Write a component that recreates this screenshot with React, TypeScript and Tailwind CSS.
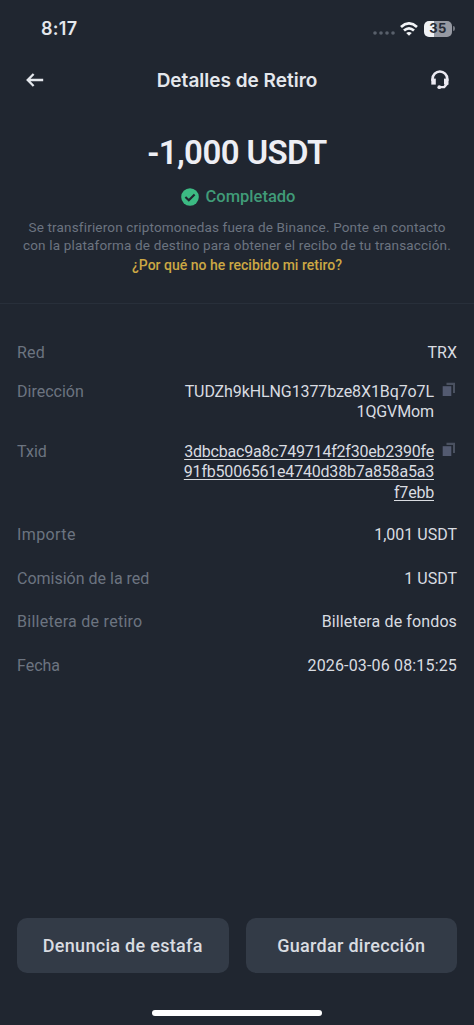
import type { ReactNode } from "react";

function CopyIcon() {
  return (
    <svg viewBox="0 0 14 15" className="mr-px h-[15px] w-[14px] shrink-0">
      <path d="M4.5 0.8H13V11H11V3H4.5Z" fill="#4a5160" />
      <rect x="0.7" y="4.2" width="8.6" height="9.8" fill="#535a70" />
    </svg>
  );
}

function Row({ label, track = "", className = "", children }: { label: string; track?: string; className?: string; children: ReactNode }) {
  return (
    <div className={`flex justify-between text-[16px] leading-[20.5px] ${className}`}>
      <span className={`whitespace-nowrap text-[#6c7480] ${track}`}>{label}</span>
      {children}
    </div>
  );
}

export default function App() {
  return (
    <main className="flex h-[1025px] w-[474px] flex-col overflow-hidden bg-[#202630] font-['Roboto','Liberation_Sans',sans-serif] text-[#d9dce1]">
      <header className="font-['Inter','Liberation_Sans',sans-serif]">
        <div className="flex h-[56px] items-center justify-between pl-[41px] pr-[19px] pt-px">
          <span className="text-[18px] font-semibold tracking-[0.3px] text-[#e4e7ec]">8:17</span>
          <div className="flex items-center">
            <svg viewBox="0 0 22 6" className="mr-[5px] mt-[9px] h-[6px] w-[22px]" fill="#59606b">
              <circle cx="2" cy="3" r="1.8" />
              <circle cx="8" cy="3" r="1.8" />
              <circle cx="14" cy="3" r="1.8" />
              <circle cx="20" cy="3" r="1.8" />
            </svg>
            <svg viewBox="0 0 18 14" className="mr-[6px] h-[14px] w-[18px]" fill="none" stroke="#f2f4f7" strokeWidth="2.7">
              <path d="M1 5Q9-2.2 17 5" />
              <path d="M4 8.6Q9 4.1 14 8.6" />
              <path d="M9 13.8L6.2 11Q9 8.8 11.8 11Z" fill="#f2f4f7" stroke="none" />
            </svg>
            <div className="flex h-[16px] w-[28px] items-center justify-center rounded-[5px] bg-linear-to-r from-[#f0f2f5] from-36% to-[#9699a2] to-36% text-[13px] font-bold leading-none tracking-[0.5px] text-[#252a34]">35</div>
            <div className="ml-px h-[5px] w-[2px] rounded-r bg-[#737780]" />
          </div>
        </div>
        <div className="flex h-[48px] items-center justify-between pl-[26px] pr-[24px]">
          <svg viewBox="0 0 18 14" className="h-[14px] w-[18px]" fill="none" stroke="#e4e7ec" strokeWidth="2.3">
            <path d="M17.2 7H2M7.6 1L1.7 7L7.6 13" />
          </svg>
          <h1 className="whitespace-nowrap pt-[2px] text-[19px] font-semibold text-[#e4e7ec]">Detalles de Retiro</h1>
          <svg viewBox="0 0 20 20" className="h-[20px] w-[20px]" fill="none" stroke="#eceaf2">
            <path d="M2.6 11V8.8A7.3 7.3 0 0 1 17.2 8.8V11" strokeWidth="2.6" />
            <path d="M1.3 8.6H5.8V14.6H1.3Z" fill="#eceaf2" stroke="none" />
            <path d="M18.5 8.6H14V14.6H18.5Z" fill="#eceaf2" stroke="none" />
            <path d="M17.3 13.5L14.2 17.1H9" strokeWidth="2.4" />
            <circle cx="9.3" cy="17.2" r="1.9" fill="#eceaf2" stroke="none" />
          </svg>
        </div>
      </header>

      <section className="flex h-[200px] flex-col items-center border-b border-[#282f3a] pt-[29px] text-center">
        <p className="whitespace-nowrap text-[33px] font-semibold leading-[40px] tracking-[-0.6px] text-[#edeef4]">-1,000 USDT</p>
        <div className="mt-[13px] flex h-[22px] items-center gap-[7px] pl-[2px]">
          <svg viewBox="0 0 18 18" className="h-[18px] w-[18px]">
            <circle cx="9" cy="9" r="8.8" fill="#3cba83" />
            <path d="M4.4 9L7.8 12.2L13.6 6.4" fill="none" stroke="#202630" strokeWidth="2.1" />
          </svg>
          <span className="whitespace-nowrap text-[16.5px] font-medium text-[#409b78]">Completado</span>
        </div>
        <p className="mt-[10px] whitespace-nowrap text-[13.5px] leading-[18px] tracking-[0.17px] text-[#6c7480]">
          Se transfirieron criptomonedas fuera de Binance. Ponte en contacto
          <br />
          con la plataforma de destino para obtener el recibo de tu transacción.
        </p>
        <a className="mt-px whitespace-nowrap text-[14px] font-medium leading-[20px] text-[#cca844]">¿Por qué no he recibido mi retiro?</a>
      </section>

      <section className="px-[17px] pt-[39px]">
        <Row label="Red" track="tracking-[0.2px]">
          <span>TRX</span>
        </Row>
        <Row label="Dirección" className="mt-[18px]">
          <div className="flex gap-[8px]">
            <span className="whitespace-nowrap text-right tracking-[-0.1px]">
              TUDZh9kHLNG1377bze8X1Bq7o7L
              <br />
              1QGVMom
            </span>
            <CopyIcon />
          </div>
        </Row>
        <Row label="Txid" className="mt-[19px]">
          <div className="flex gap-[8px]">
            <span className="whitespace-nowrap text-right tracking-[-0.2px] underline underline-offset-2">
              3dbcbac9a8c749714f2f30eb2390fe
              <br />
              91fb5006561e4740d38b7a858a5a3
              <br />
              f7ebb
            </span>
            <CopyIcon />
          </div>
        </Row>
        <Row label="Importe" track="tracking-[0.4px]" className="mt-[22px]">
          <span>1,001 USDT</span>
        </Row>
        <Row label="Comisión de la red" className="mt-[23px]">
          <span>1 USDT</span>
        </Row>
        <Row label="Billetera de retiro" track="tracking-[0.27px]" className="mt-[23px]">
          <span className="tracking-[0.12px]">Billetera de fondos</span>
        </Row>
        <Row label="Fecha" className="mt-[23px]">
          <span className="tracking-[0.16px]">2026-03-06 08:15:25</span>
        </Row>
      </section>

      <footer className="mt-auto px-[17px]">
        <div className="grid grid-cols-2 gap-[17px]">
          <button className="h-[55px] whitespace-nowrap rounded-[10px] bg-[#333b47] text-[18px] font-medium tracking-[0.3px]">Denuncia de estafa</button>
          <button className="h-[55px] whitespace-nowrap rounded-[10px] bg-[#333b47] text-[18px] font-medium tracking-[0.3px]">Guardar dirección</button>
        </div>
        <div className="mx-auto mb-[9px] mt-[37px] h-[6px] w-[170px] rounded-full bg-white" />
      </footer>
    </main>
  );
}
